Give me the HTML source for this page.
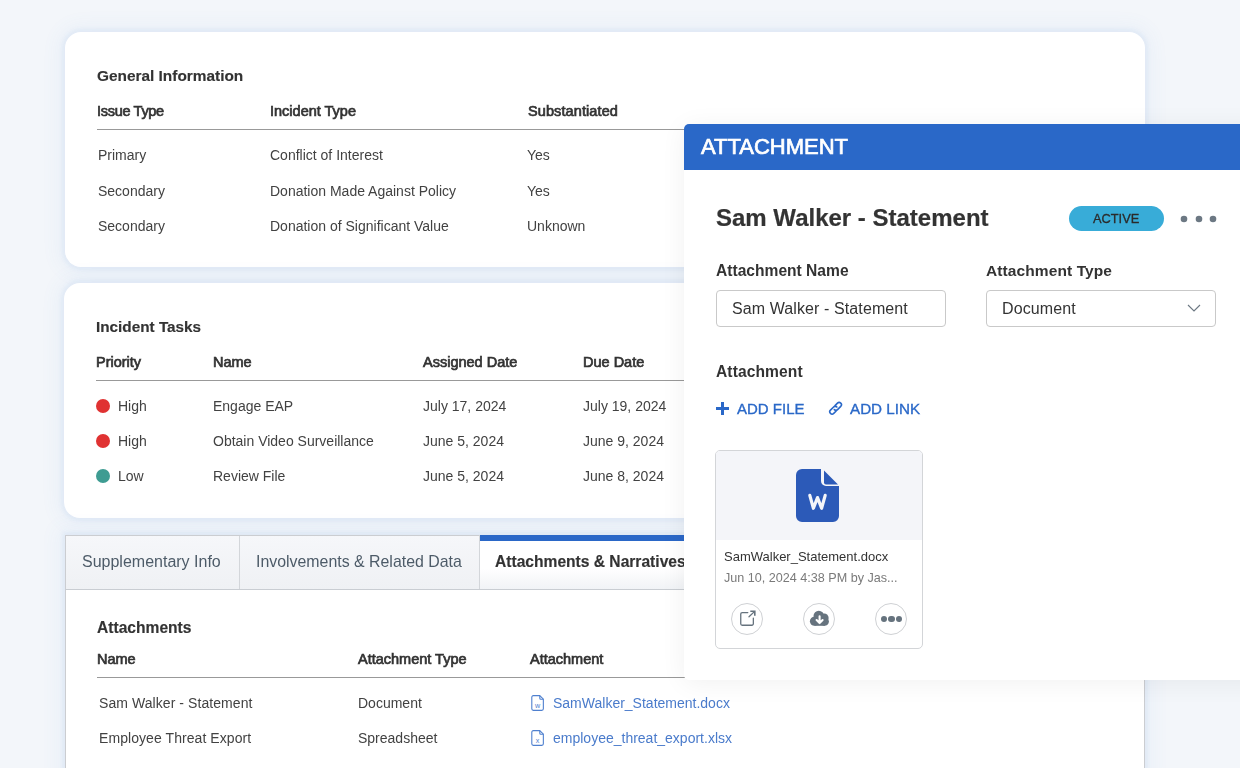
<!DOCTYPE html>
<html><head><meta charset="utf-8"><style>
html,body{margin:0;padding:0}
body{width:1240px;height:768px;overflow:hidden;position:relative;background:#f3f6fa;font-family:"Liberation Sans",sans-serif}
.t{position:absolute;white-space:nowrap;line-height:1;will-change:transform}
.card{position:absolute;background:#fff;border-radius:16px;box-shadow:0 0 4px 3px rgba(80,140,210,0.065),0 0 18px 8px rgba(80,140,210,0.05)}
.ln{position:absolute;height:1px;background:#999}
.dot{position:absolute;width:14px;height:14px;border-radius:50%}
.tabbox{position:absolute;background:#fff;border:1px solid #cbcdd1;box-sizing:border-box;box-shadow:0 0 4px 3px rgba(80,140,210,0.065),0 0 18px 8px rgba(80,140,210,0.05)}
.tab{position:absolute;background:linear-gradient(#f6f7fa,#eff1f4)}
.inp{position:absolute;box-sizing:border-box;border:1px solid #c9c9c9;border-radius:4px;background:#fff}
</style></head><body>
<div class="card" style="left:65px;top:32px;width:1080px;height:235px"></div>
<div class="t" style="left:97.00px;top:67.66px;font-size:15.4px;font-weight:700;color:#333333;-webkit-text-stroke:0.15px #333">General Information</div>
<div class="t" style="left:96.80px;top:103.83px;font-size:14.5px;font-weight:400;color:#333333;-webkit-text-stroke:0.7px #333;letter-spacing:-0.3px">Issue Type</div>
<div class="t" style="left:269.80px;top:103.83px;font-size:14.5px;font-weight:400;color:#333333;-webkit-text-stroke:0.7px #333;letter-spacing:0px">Incident Type</div>
<div class="t" style="left:527.60px;top:103.83px;font-size:14.5px;font-weight:400;color:#333333;-webkit-text-stroke:0.7px #333;letter-spacing:0.1px">Substantiated</div>
<div class="ln" style="left:97px;top:129px;width:1016px"></div>
<div class="t" style="left:98.40px;top:148.45px;font-size:14px;font-weight:400;color:#424242;">Primary</div>
<div class="t" style="left:269.80px;top:148.45px;font-size:14px;font-weight:400;color:#424242;">Conflict of Interest</div>
<div class="t" style="left:527.40px;top:148.45px;font-size:14px;font-weight:400;color:#424242;">Yes</div>
<div class="t" style="left:98.40px;top:183.60px;font-size:14px;font-weight:400;color:#424242;">Secondary</div>
<div class="t" style="left:269.80px;top:183.60px;font-size:14px;font-weight:400;color:#424242;">Donation Made Against Policy</div>
<div class="t" style="left:527.40px;top:183.60px;font-size:14px;font-weight:400;color:#424242;">Yes</div>
<div class="t" style="left:98.40px;top:218.75px;font-size:14px;font-weight:400;color:#424242;">Secondary</div>
<div class="t" style="left:269.80px;top:218.75px;font-size:14px;font-weight:400;color:#424242;">Donation of Significant Value</div>
<div class="t" style="left:527.40px;top:218.75px;font-size:14px;font-weight:400;color:#424242;">Unknown</div>
<div class="card" style="left:64px;top:283px;width:1081px;height:235px"></div>
<div class="t" style="left:96.00px;top:318.75px;font-size:15.3px;font-weight:700;color:#333333;-webkit-text-stroke:0.15px #333">Incident Tasks</div>
<div class="t" style="left:96.20px;top:354.73px;font-size:14.5px;font-weight:400;color:#333333;-webkit-text-stroke:0.7px #333">Priority</div>
<div class="t" style="left:212.80px;top:354.73px;font-size:14.5px;font-weight:400;color:#333333;-webkit-text-stroke:0.7px #333">Name</div>
<div class="t" style="left:422.80px;top:354.73px;font-size:14.5px;font-weight:400;color:#333333;-webkit-text-stroke:0.7px #333">Assigned Date</div>
<div class="t" style="left:582.80px;top:354.73px;font-size:14.5px;font-weight:400;color:#333333;-webkit-text-stroke:0.7px #333">Due Date</div>
<div class="ln" style="left:96px;top:380px;width:1017px"></div>
<div class="dot" style="left:96px;top:399.10px;background:#e03232"></div>
<div class="t" style="left:117.80px;top:399.45px;font-size:14px;font-weight:400;color:#424242;">High</div>
<div class="t" style="left:213.20px;top:399.45px;font-size:14px;font-weight:400;color:#424242;">Engage EAP</div>
<div class="t" style="left:422.60px;top:399.45px;font-size:14px;font-weight:400;color:#424242;">July 17, 2024</div>
<div class="t" style="left:582.70px;top:399.45px;font-size:14px;font-weight:400;color:#424242;">July 19, 2024</div>
<div class="dot" style="left:96px;top:433.95px;background:#e03232"></div>
<div class="t" style="left:117.80px;top:434.30px;font-size:14px;font-weight:400;color:#424242;">High</div>
<div class="t" style="left:213.20px;top:434.30px;font-size:14px;font-weight:400;color:#424242;">Obtain Video Surveillance</div>
<div class="t" style="left:422.60px;top:434.30px;font-size:14px;font-weight:400;color:#424242;">June 5, 2024</div>
<div class="t" style="left:582.70px;top:434.30px;font-size:14px;font-weight:400;color:#424242;">June 9, 2024</div>
<div class="dot" style="left:96px;top:468.80px;background:#3e9c92"></div>
<div class="t" style="left:117.80px;top:469.15px;font-size:14px;font-weight:400;color:#424242;">Low</div>
<div class="t" style="left:213.20px;top:469.15px;font-size:14px;font-weight:400;color:#424242;">Review File</div>
<div class="t" style="left:422.60px;top:469.15px;font-size:14px;font-weight:400;color:#424242;">June 5, 2024</div>
<div class="t" style="left:582.70px;top:469.15px;font-size:14px;font-weight:400;color:#424242;">June 8, 2024</div>
<div class="tabbox" style="left:65px;top:535px;width:1080px;height:240px"></div>
<div class="tab" style="left:66px;top:536px;width:173px;height:53px"></div>
<div class="tab" style="left:239px;top:536px;width:240px;height:53px;border-left:1px solid #d3d6da"></div>
<div style="position:absolute;left:479px;top:535px;width:666px;height:54px;background:linear-gradient(#fff 62%,#f1f3f6);border-left:1px solid #d3d6da;box-sizing:border-box"></div>
<div style="position:absolute;left:480px;top:535px;width:665px;height:6px;background:#2a67c7"></div>
<div style="position:absolute;left:65px;top:589px;width:1080px;height:1px;background:#c9cdd2"></div>
<div class="t" style="left:82.40px;top:553.76px;font-size:16.0px;font-weight:400;color:#4d5b68;">Supplementary Info</div>
<div class="t" style="left:256.20px;top:553.84px;font-size:15.9px;font-weight:400;color:#4d5b68;">Involvements &amp; Related Data</div>
<div class="t" style="left:495.40px;top:553.59px;font-size:15.6px;font-weight:700;color:#333333;-webkit-text-stroke:0.15px #333">Attachments &amp; Narratives</div>
<div class="t" style="left:97.20px;top:619.69px;font-size:15.6px;font-weight:700;color:#333333;-webkit-text-stroke:0.15px #333">Attachments</div>
<div class="t" style="left:96.80px;top:651.53px;font-size:14.5px;font-weight:400;color:#333333;-webkit-text-stroke:0.7px #333">Name</div>
<div class="t" style="left:357.80px;top:651.53px;font-size:14.5px;font-weight:400;color:#333333;-webkit-text-stroke:0.7px #333">Attachment Type</div>
<div class="t" style="left:530.20px;top:651.53px;font-size:14.5px;font-weight:400;color:#333333;-webkit-text-stroke:0.7px #333">Attachment</div>
<div class="ln" style="left:97px;top:677px;width:1016px"></div>
<div class="t" style="left:99.00px;top:696.15px;font-size:14px;font-weight:400;color:#424242;letter-spacing:0.07px">Sam Walker - Statement</div>
<div class="t" style="left:357.60px;top:696.15px;font-size:14px;font-weight:400;color:#424242;">Document</div>
<div class="t" style="left:552.60px;top:696.15px;font-size:14px;font-weight:400;color:#4a7bcb;">SamWalker_Statement.docx</div>
<svg style="position:absolute;left:530px;top:695px" width="15" height="17" viewBox="0 0 15 17"><g fill="none" stroke="#4f80cf" stroke-width="1.1" stroke-linejoin="round"><path d="M9.8 0.65H3.3a1.5 1.5 0 0 0-1.5 1.5V13.85a1.5 1.5 0 0 0 1.5 1.5H11.85a1.5 1.5 0 0 0 1.5-1.5V4.2z"/><path d="M9.8 0.65V3.2a1 1 0 0 0 1 1H13.35"/></g><text x="7.6" y="12.6" font-family="Liberation Sans" font-size="7.2" fill="#4f80cf" text-anchor="middle">w</text></svg>
<div class="t" style="left:99.00px;top:731.15px;font-size:14px;font-weight:400;color:#424242;letter-spacing:0.07px">Employee Threat Export</div>
<div class="t" style="left:357.60px;top:731.15px;font-size:14px;font-weight:400;color:#424242;">Spreadsheet</div>
<div class="t" style="left:552.60px;top:731.15px;font-size:14px;font-weight:400;color:#4a7bcb;">employee_threat_export.xlsx</div>
<svg style="position:absolute;left:530px;top:730px" width="15" height="17" viewBox="0 0 15 17"><g fill="none" stroke="#4f80cf" stroke-width="1.1" stroke-linejoin="round"><path d="M9.8 0.65H3.3a1.5 1.5 0 0 0-1.5 1.5V13.85a1.5 1.5 0 0 0 1.5 1.5H11.85a1.5 1.5 0 0 0 1.5-1.5V4.2z"/><path d="M9.8 0.65V3.2a1 1 0 0 0 1 1H13.35"/></g><text x="7.6" y="12.6" font-family="Liberation Sans" font-size="7.2" fill="#4f80cf" text-anchor="middle">x</text></svg>
<div id="panel" style="position:absolute;left:684px;top:124px;width:600px;height:556px;background:#fff;border-radius:5px;box-shadow:0 3px 26px rgba(0,0,0,0.06)"></div>
<div style="position:absolute;left:684px;top:124px;width:600px;height:46px;background:#2a68c8;border-radius:5px 0 0 0"></div>
<div class="t" style="left:700.60px;top:135.78px;font-size:22px;font-weight:400;color:#ffffff;-webkit-text-stroke:0.7px #fff">ATTACHMENT</div>
<div class="t" style="left:715.80px;top:205.98px;font-size:24px;font-weight:700;color:#333333;-webkit-text-stroke:0.2px #333">Sam Walker - Statement</div>
<div style="position:absolute;left:1069px;top:206px;width:95px;height:25px;border-radius:13px;background:#38acd8"></div>
<div class="t" style="left:1092.90px;top:212.76px;font-size:12.8px;font-weight:400;color:#2b2b2b;-webkit-text-stroke:0.3px #2b2b2b">ACTIVE</div>
<svg style="position:absolute;left:1179.00px;top:214.10px" width="10" height="10"><circle cx="5" cy="5" r="3.3" fill="#6c7883"/></svg>
<svg style="position:absolute;left:1193.60px;top:214.10px" width="10" height="10"><circle cx="5" cy="5" r="3.3" fill="#6c7883"/></svg>
<svg style="position:absolute;left:1208.00px;top:214.10px" width="10" height="10"><circle cx="5" cy="5" r="3.3" fill="#6c7883"/></svg>
<div class="t" style="left:716.20px;top:262.79px;font-size:15.6px;font-weight:700;color:#333333;">Attachment Name</div>
<div class="t" style="left:986.20px;top:262.88px;font-size:15.5px;font-weight:700;color:#333333;letter-spacing:0.1px">Attachment Type</div>
<div class="inp" style="left:716px;top:290px;width:230px;height:37px"></div>
<div class="inp" style="left:986px;top:290px;width:230px;height:37px"></div>
<div class="t" style="left:732.20px;top:300.56px;font-size:16px;font-weight:400;color:#333333;letter-spacing:0.1px">Sam Walker - Statement</div>
<div class="t" style="left:1002.20px;top:300.56px;font-size:16px;font-weight:400;color:#333333;letter-spacing:0.1px">Document</div>
<svg style="position:absolute;left:1187px;top:303px" width="14" height="10" viewBox="0 0 14 10"><path d="M1 2l6 6l6-6" fill="none" stroke="#6c7883" stroke-width="1.15"/></svg>
<div class="t" style="left:716.20px;top:363.79px;font-size:15.6px;font-weight:700;color:#333333;letter-spacing:0.1px">Attachment</div>
<svg style="position:absolute;left:716px;top:402px" width="13" height="13" viewBox="0 0 13 13"><path d="M6.5 0v13M0 6.5h13" stroke="#2a68c8" stroke-width="3"/></svg>
<div class="t" style="left:736.80px;top:401.30px;font-size:15px;font-weight:400;color:#2a68c8;-webkit-text-stroke:0.35px #2a68c8">ADD FILE</div>
<svg style="position:absolute;left:828px;top:401px" width="15" height="15" viewBox="0 0 15 15"><g transform="translate(7.6 7.3) rotate(-45)" fill="none" stroke="#2a68c8" stroke-width="1.6" stroke-linecap="round"><path d="M-1.8 2.3H-4.95A2.3 2.3 0 0 1 -4.95 -2.3H-0.5A2.3 2.3 0 0 1 1.8 0"/><path d="M1.8 -2.3H4.95A2.3 2.3 0 0 1 4.95 2.3H0.5A2.3 2.3 0 0 1 -1.8 0"/></g></svg>
<div class="t" style="left:849.80px;top:401.13px;font-size:15.2px;font-weight:400;color:#2a68c8;-webkit-text-stroke:0.35px #2a68c8">ADD LINK</div>
<div style="position:absolute;left:715px;top:450px;width:208px;height:199px;box-sizing:border-box;border:1px solid #d3d5d8;border-radius:5px;overflow:hidden;background:#fff"><div style="height:89px;background:#f4f5f9"></div></div>
<svg style="position:absolute;left:796px;top:469px" width="43" height="53" viewBox="0 0 43 53"><path d="M6 0H25V12a5 5 0 0 0 5 5H43V47a6 6 0 0 1-6 6H6a6 6 0 0 1-6-6V6a6 6 0 0 1 6-6z" fill="#2c5ab8"/><path d="M28 1.5L42 15.5H30a2 2 0 0 1-2-2z" fill="#2c5ab8"/><path d="M13.8 26.4L17.4 39.3L21.5 28.6L25.6 39.3L29.2 26.4" fill="none" stroke="#f4f5f9" stroke-width="3.2" stroke-linecap="round" stroke-linejoin="round"/></svg>
<div class="t" style="left:723.60px;top:550.20px;font-size:13px;font-weight:400;color:#333333;">SamWalker_Statement.docx</div>
<div class="t" style="left:723.80px;top:571.93px;font-size:12.6px;font-weight:400;color:#7a7a7a;">Jun 10, 2024 4:38 PM by Jas...</div>
<div style="position:absolute;left:731px;top:603px;width:32px;height:32px;box-sizing:border-box;border:1px solid #cfd1d4;border-radius:50%"></div>
<div style="position:absolute;left:803px;top:603px;width:32px;height:32px;box-sizing:border-box;border:1px solid #cfd1d4;border-radius:50%"></div>
<div style="position:absolute;left:875px;top:603px;width:32px;height:32px;box-sizing:border-box;border:1px solid #cfd1d4;border-radius:50%"></div>
<svg style="position:absolute;left:739px;top:610px" width="18" height="18" viewBox="0 0 18 18"><g fill="none" stroke="#66737e" stroke-linecap="round" stroke-linejoin="round"><path d="M8.8 2.55H3.25a1.5 1.5 0 0 0-1.5 1.5V13.75a1.5 1.5 0 0 0 1.5 1.5H12.85a1.5 1.5 0 0 0 1.5-1.5V8.1" stroke-width="1.3"/><path d="M10 6.7L15.4 1.6" stroke-width="1.3"/><path d="M11.3 1.3H15.8V5.8" stroke-width="1.6" stroke-linecap="butt" stroke-linejoin="miter"/></g></svg>
<svg style="position:absolute;left:805px;top:605px" width="30" height="28" viewBox="0 0 30 28"><g fill="#66737e"><circle cx="9.4" cy="16.3" r="4.5"/><circle cx="13.8" cy="11.1" r="5.3"/><circle cx="19.3" cy="12.9" r="4.3"/><circle cx="19.6" cy="16.5" r="4.3"/><rect x="9.4" y="12" width="10.5" height="8.8"/></g><path d="M14.6 11.2V18M11.6 15.1L14.6 18.1L17.6 15.1" fill="none" stroke="#fff" stroke-width="2.1" stroke-linecap="round" stroke-linejoin="round"/></svg>
<div style="position:absolute;left:881.10px;top:615.90px;width:6.2px;height:6.2px;border-radius:50%;background:#66737e"></div>
<div style="position:absolute;left:888.40px;top:615.90px;width:6.2px;height:6.2px;border-radius:50%;background:#66737e"></div>
<div style="position:absolute;left:895.70px;top:615.90px;width:6.2px;height:6.2px;border-radius:50%;background:#66737e"></div>
</body></html>
